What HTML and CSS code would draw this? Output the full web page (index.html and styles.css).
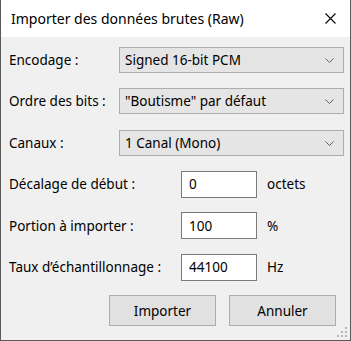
FILE: index.html
```html
<!DOCTYPE html>
<html lang="fr">
<head>
    <meta charset="UTF-8">
    <meta name="viewport" content="width=device-width, initial-scale=1.0">
    <title>Importer des données brutes (Raw)</title>
    <link rel="stylesheet" href="styles.css">
</head>
<body>
    <div class="window">
        <div class="titlebar">
            <span class="title">Importer des données brutes (Raw)</span>
            <span class="close">
                <svg width="11" height="11" viewBox="0 0 11 11">
                    <path d="M0.5 0.5 L10.5 10.5 M10.5 0.5 L0.5 10.5" stroke="#000" stroke-width="1.1" fill="none"/>
                </svg>
            </span>
        </div>

        <div class="content">
            <div class="row">
                <label class="label label-short">Encodage :</label>
                <div class="combo">
                    <span>Signed 16-bit PCM</span>
                    <svg class="chevron" width="9" height="5" viewBox="0 0 9 5"><path d="M0.5 0.5 L4.5 4.5 L8.5 0.5" stroke="#606060" fill="none"/></svg>
                </div>
            </div>
            <div class="row">
                <label class="label label-short">Ordre des bits :</label>
                <div class="combo">
                    <span>"Boutisme" par défaut</span>
                    <svg class="chevron" width="9" height="5" viewBox="0 0 9 5"><path d="M0.5 0.5 L4.5 4.5 L8.5 0.5" stroke="#606060" fill="none"/></svg>
                </div>
            </div>
            <div class="row">
                <label class="label label-short">Canaux :</label>
                <div class="combo">
                    <span>1 Canal (Mono)</span>
                    <svg class="chevron" width="9" height="5" viewBox="0 0 9 5"><path d="M0.5 0.5 L4.5 4.5 L8.5 0.5" stroke="#606060" fill="none"/></svg>
                </div>
            </div>
            <div class="row">
                <label class="label label-long" for="offset">Décalage de début :</label>
                <input class="field" id="offset" type="text" value="0">
                <span class="unit">octets</span>
            </div>
            <div class="row">
                <label class="label label-long" for="portion">Portion à importer :</label>
                <input class="field" id="portion" type="text" value="100">
                <span class="unit">%</span>
            </div>
            <div class="row">
                <label class="label label-long" for="rate">Taux d’échantillonnage :</label>
                <input class="field" id="rate" type="text" value="44100">
                <span class="unit">Hz</span>
            </div>

            <div class="buttons">
                <button class="button">Importer</button>
                <button class="button">Annuler</button>
            </div>
        </div>

        <svg class="grip" width="10" height="10" viewBox="0 0 10 10">
            <rect x="8" y="0" width="2" height="2" fill="#b8b8b8"/>
            <rect x="4" y="4" width="2" height="2" fill="#b8b8b8"/>
            <rect x="8" y="4" width="2" height="2" fill="#b8b8b8"/>
            <rect x="0" y="8" width="2" height="2" fill="#b8b8b8"/>
            <rect x="4" y="8" width="2" height="2" fill="#b8b8b8"/>
            <rect x="8" y="8" width="2" height="2" fill="#b8b8b8"/>
        </svg>
    </div>
</body>
</html>
```

FILE: styles.css
```css
body {
    margin: 0;
    padding: 0;
    font-family: "Noto Sans", Arial, sans-serif;
    font-size: 13.5px;
    color: #000;
    background-color: #f0f0f0;
}

.window {
    position: relative;
    width: 351px;
    height: 341px;
    box-sizing: border-box;
    border: 1px solid #5a5a5a;
    border-top: none;
    background-color: #f0f0f0;
}

.titlebar {
    height: 37px;
    background-color: white;
    display: flex;
    align-items: center;
    justify-content: space-between;
    padding-left: 10px;
}

.title {
    font-size: 14px;
}

.close {
    width: 40px;
    height: 37px;
    display: flex;
    align-items: center;
    justify-content: center;
}

.content {
    padding: 2px 0 0 8px;
}

.row {
    height: 41.5px;
    display: flex;
    align-items: center;
}

.label {
    flex-shrink: 0;
}

.label-short {
    width: 110px;
}

.label-long {
    width: 172px;
}

.combo {
    width: 225px;
    height: 26px;
    box-sizing: border-box;
    border: 1px solid #adadad;
    background-color: #e5e5e5;
    display: flex;
    align-items: center;
    justify-content: space-between;
    padding: 0 9px 0 5px;
}

.chevron {
    margin-top: 1px;
}

.field {
    width: 76px;
    height: 27px;
    box-sizing: border-box;
    border: 1px solid #7a7a7a;
    background-color: white;
    padding: 0 0 0 7px;
    margin: 0;
    font-family: inherit;
    font-size: 13.5px;
    color: #000;
    outline: none;
}

.unit {
    margin-left: 10px;
}

.buttons {
    display: flex;
    justify-content: flex-end;
    gap: 13px;
    padding-right: 14px;
    margin-top: 7px;
}

.button {
    width: 107px;
    height: 31px;
    box-sizing: border-box;
    border: 1px solid #adadad;
    background-color: #e1e1e1;
    font-family: inherit;
    font-size: 13.5px;
    color: #000;
    padding: 0;
    margin: 0;
}

.grip {
    position: absolute;
    right: 3px;
    bottom: 3px;
}
```
